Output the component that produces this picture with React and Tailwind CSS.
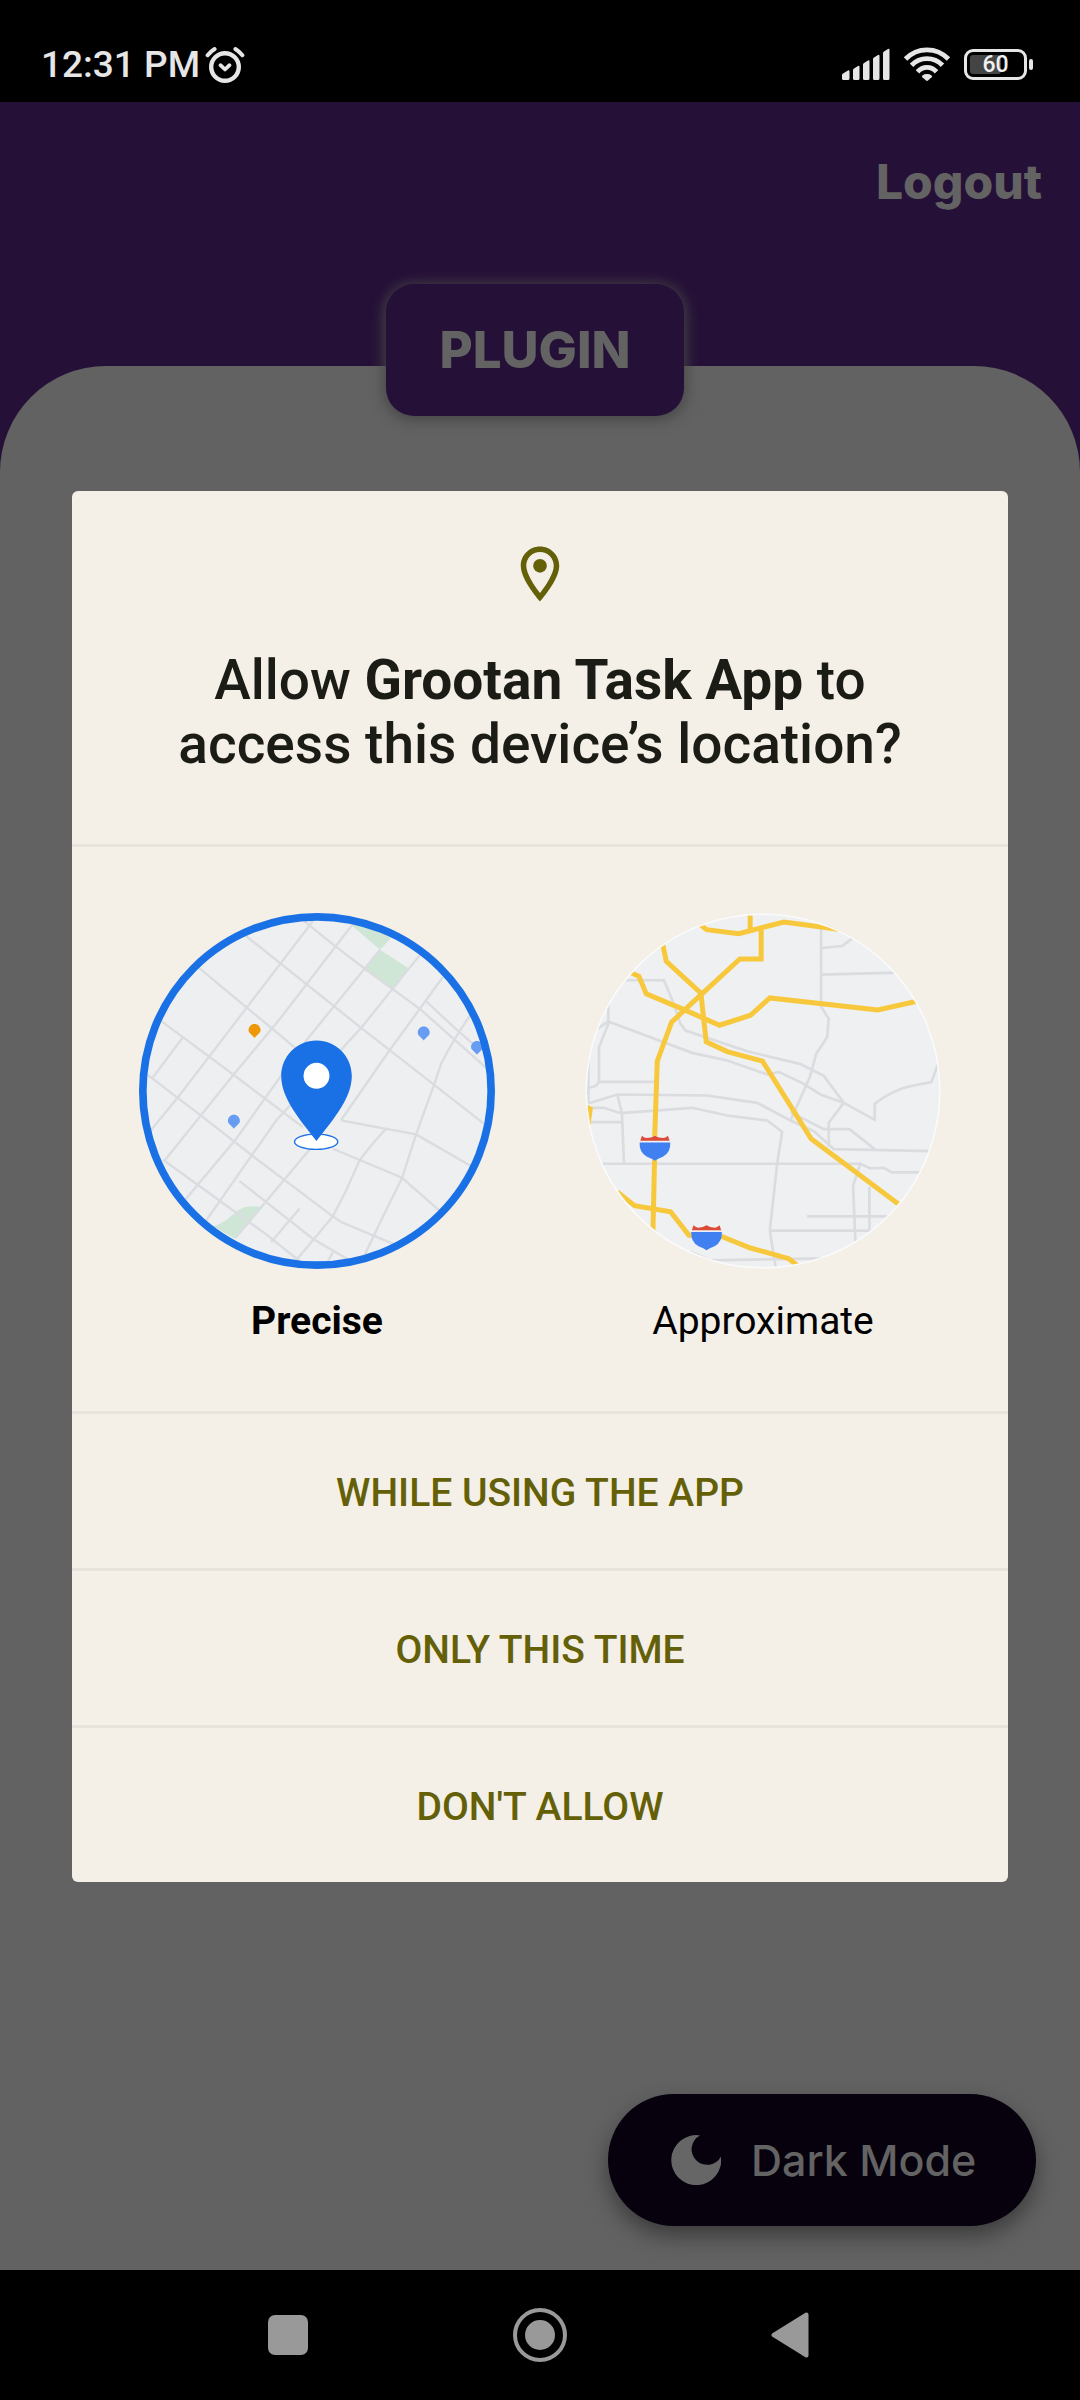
const GRAY = 'text-[#636363]'

function AlarmIcon() {
  return (
    <svg viewBox="0 0 40 38" className="h-[38px] w-[40px]" fill="none" stroke="#e6e6e6" strokeLinecap="round" aria-hidden="true">
      <circle cx="20" cy="21" r="13.8" strokeWidth="4.4" />
      <path d="M15.500 19.200l4.500 4.300 4.500-4.300" strokeWidth="3.8" strokeLinejoin="round" />
      <path d="M2.600 9.200Q5.500 5.600 9.600 3M37.400 9.200Q34.500 5.600 30.400 3" strokeWidth="4" />
    </svg>
  )
}

function SignalIcon() {
  return (
    <svg viewBox="0 0 48 32" className="h-[32px] w-[48px]" fill="#e6e6e6" aria-hidden="true">
      <path d="M0 27q0-1 1-1.600l5-3q1.500-.6 1.500 1V30.500q0 1.500-1.500 1.500H1.500Q0 32 0 30.500z" />
      <path d="M11 22q0-1 1-1.600l4-2.500q1.500-.6 1.500 1V30.500q0 1.500-1.500 1.500h-3.500Q11 32 11 30.500z" />
      <path d="M21 16.500q0-1 1-1.600l4-2.500q1.500-.6 1.500 1V30.500q0 1.500-1.500 1.500h-3.500Q21 32 21 30.500z" />
      <path d="M31 11q0-1 1-1.600l4-2.500q1.500-.6 1.500 1V30.500q0 1.500-1.500 1.500h-3.500Q31 32 31 30.500z" />
      <path d="M41 5q0-1 1-1.600l4-2.500q1.500-.6 1.500 1V30.500q0 1.500-1.500 1.500h-3.500Q41 32 41 30.500z" />
    </svg>
  )
}

function WifiIcon() {
  return (
    <svg viewBox="0 0 48 36" className="h-[36px] w-[48px]" fill="none" stroke="#e6e6e6" strokeWidth="4.800" aria-hidden="true">
      <path d="M2.500 13Q11.500 3.800 24 3.800t21.500 9.200" />
      <path d="M8.500 19.200Q15 12.600 24 12.600t15.500 6.600" />
      <path d="M14.500 25.800Q18.500 21.400 24 21.400T33.500 25.800" />
      <path d="M24 28q2.800 0 4.600 1.400 1 .8 0 1.900L25 34.600q-1 .9-2 0L19.400 31.300q-1-1.100 0-1.900Q21.200 28 24 28z" fill="#e6e6e6" stroke="none" />
    </svg>
  )
}

function Battery() {
  return (
    <div className="flex items-center gap-[2px]">
      <div className="relative flex h-[31px] w-[63px] items-center justify-center rounded-[9px] border-[3px] border-[#e6e6e6]">
        <span className="absolute inset-y-[3px] left-[3px] w-[31px] rounded-[3px] bg-[#444444]" />
        <span className="relative text-[23px] leading-none font-medium text-[#f0f0f0]">60</span>
      </div>
      <span className="h-[11px] w-[4px] rounded-[2px] bg-[#e6e6e6]" />
    </div>
  )
}

function StatusBar() {
  return (
    <header className="flex h-[102px] items-start justify-between bg-black pr-[47px] pl-[41px]">
      <div className="flex items-center gap-[5px] pt-[45px]">
        <span className="text-[37px] leading-[40px] font-medium text-[#e6e6e6]">12:31 PM</span>
        <AlarmIcon />
      </div>
      <div className="flex items-center gap-[13px] pt-[46px]">
        <SignalIcon />
        <WifiIcon />
        <Battery />
      </div>
    </header>
  )
}

function PlaceIcon() {
  return (
    <svg viewBox="0 0 24 24" className="size-[66px]" fill="#646008" aria-hidden="true">
      <path d="M12 2C8.130 2 5 5.130 5 9c0 5.250 7 13 7 13s7-7.750 7-13c0-3.870-3.130-7-7-7zM7 9c0-2.760 2.240-5 5-5s5 2.240 5 5c0 2.880-2.880 7.190-5 9.880C9.920 16.210 7 11.850 7 9z" />
      <circle cx="12" cy="9" r="2.500" />
    </svg>
  )
}

function SmallPin({ x, y, color }) {
  return (
    <path
      transform={`translate(${x} ${y})`}
      fill={color}
      d="M0-18c10 0 18 8 18 18 0 10-10 13-18 24-8-11-18-14-18-24 0-10 8-18 18-18z"
    />
  )
}

function PreciseMap() {
  return (
    <svg viewBox="58 67 1069 1069" className="size-[356px]" aria-hidden="true">
      <clipPath id="precise-clip">
        <circle cx="592" cy="601" r="525" />
      </clipPath>
      <g clipPath="url(#precise-clip)">
        <rect x="58" y="67" width="1069" height="1069" fill="#edeff1" />
        <g fill="#cfe6d6">
          <path d="M680 90L810 130 812 145 782 177z" />
          <path d="M782 177L866 232 820 296 738 236z" />
          <path d="M280 1008Q310 1000 340 972 365 948 390 948L432 948 348 1046z" />
        </g>
        <g fill="none" stroke="#dadce0" strokeWidth="7">
          <path d="M378 135L560 280 725 412 1110 712" />
          <path d="M555 92L645 165 738 236 905 358 1110 540" />
          <path d="M920 332L1020 425 1085 480" />
          <path d="M236 230L530 474" />
          <path d="M120 388L345 555 550 710M640 775L848 862 965 965" />
          <path d="M80 550L250 680 410 805 640 978 665 995 825 1062" />
          <path d="M130 808L440 1032 540 1112" />
          <path d="M360 872L580 1045 690 1110" />
          <path d="M580 92L380 353 175 620 85 730" />
          <path d="M700 100L485 380 340 555 135 810" />
          <path d="M782 177L560 450 350 745 195 930" />
          <path d="M190 440L100 560" />
          <path d="M900 195L725 412 470 690 260 990" />
          <path d="M970 260L810 480 664 690" />
          <path d="M572 775L350 1040" />
          <path d="M540 955L455 1055" />
          <path d="M664 690L890 732 1060 830" />
          <path d="M800 715Q740 780 718 815L680 900 640 978 528 1112" />
          <path d="M1055 370Q1000 450 965 520L945 580 890 732 848 862 790 980 728 1110" />
          <path d="M640 1085L620 1125" />
        </g>
        <SmallPin x={405} y={418} color="#ee9807" />
        <SmallPin x={343} y={691} color="#669df3" />
        <SmallPin x={913} y={426} color="#669df3" />
        <SmallPin x={1073} y={469} color="#669df3" />
        <ellipse cx="590" cy="754" rx="65" ry="23" fill="#ffffff" stroke="#1a71e5" strokeWidth="4" />
        <path
          d="M591 450c58 0 106 47 106 106 0 66-52 127-106 196-54-69-106-130-106-196 0-59 48-106 106-106z"
          fill="#1a71e5"
        />
        <circle cx="591" cy="556" r="39" fill="#ffffff" />
      </g>
      <circle cx="592.500" cy="601.500" r="523" fill="none" stroke="#1a71e5" strokeWidth="23" />
    </svg>
  )
}

function Shield({ x, y }) {
  return (
    <g transform={`translate(${x} ${y})`}>
      <path d="M-41-28Q-34-22-26-24-12-22 0-30 12-22 26-24 34-22 41-28L46-2Q46 26 0 45-46 26-46-2z" fill="#eef1f4" />
      <path d="M-44-14L-39-29Q-32-22-25-22-10-22 0-29 10-22 25-22 32-22 39-29L44-14z" fill="#dc4a38" />
      <path d="M-46-9H46Q48 20 24 34 8 40 0 46-8 40-24 34-48 20-46-9z" fill="#4080f1" />
    </g>
  )
}

function ApproximateMap() {
  return (
    <svg viewBox="73 67 1069 1069" className="size-[356px]" aria-hidden="true">
      <clipPath id="approximate-clip">
        <circle cx="607.500" cy="601.500" r="533" />
      </clipPath>
      <g clipPath="url(#approximate-clip)">
        <rect x="73" y="67" width="1069" height="1069" fill="#eef0f1" />
        <g fill="none" stroke="#dadce0" strokeWidth="8">
          <path d="M782 110V348L805 385 800 440 768 488 748 560 690 690" />
          <path d="M782 172L845 166 880 140M782 252L1010 246" />
          <path d="M180 269H310L335 328 360 400 375 420 560 482 718 520 790 556 850 637 943 688V640Q1000 595 1060 585L1113 575 1135 515" />
          <path d="M110 415L143 393 395 487 500 510 620 552 655 544 730 580 780 612 850 637 805 697V770" />
          <path d="M143 340V400L115 470V574H285M115 574Q105 592 85 590M83 500V640" />
          <path d="M85 638L170 612 440 615 590 637 690 690 760 722 820 776 1110 782" />
          <path d="M690 665L790 716H867L943 776" />
          <path d="M85 652H130L180 668 395 652 500 675 620 690 665 724 650 820 628 1020 645 1130" />
          <path d="M170 612L184 668 190 820M90 695H184M120 820H900" />
          <path d="M1080 846L995 846 970 832 930 834 900 820 878 885 885 1055" />
          <path d="M927 890V1020M740 978H980M628 1021H930" />
          <path d="M390 1085L450 1110 790 1104" />
        </g>
        <g fill="none" stroke="#f8c83c" strokeWidth="15">
          <path d="M415 98L438 117 535 129 670 94 850 118" />
          <path d="M569 70V118M602 118V205H538L372 358 333 395 290 512 282 750M282 800L277 1025" />
          <path d="M306 160L317 212 421 308 437 454 500 483 606 512 752 745 1020 945" />
          <path d="M208 245L235 257 257 310 372 358 477 404 570 374 628 322 952 358 1070 332" />
          <path d="M170 905L222 946 330 964 385 1035H400M480 1037L570 1073 685 1105 710 1125" />
        </g>
        <path d="M75 640L97 652 88 710 75 700z" fill="#f8c83c" />
        <Shield x={283} y={765} />
        <Shield x={438} y={1034} />
      </g>
      <circle cx="607.500" cy="601.500" r="531" fill="none" stroke="#fafafa" strokeWidth="5" />
    </svg>
  )
}

function AccuracyOption({ label, checked, children }) {
  return (
    <label className="flex flex-col items-center">
      <input type="radio" name="accuracy" defaultChecked={checked} className="peer sr-only" />
      {children}
      <span className="mt-[29px] text-[39px] leading-[46px] text-black peer-checked:font-bold">{label}</span>
    </label>
  )
}

function PermissionDialog() {
  return (
    <section
      role="dialog"
      aria-labelledby="permission-title"
      className="w-full divide-y-[3px] divide-[#e8e3dc] overflow-hidden rounded-[6px] bg-[#f4efe7]"
    >
      <div className="flex flex-col items-center px-[66px] pt-[50px] pb-[68px]">
        <PlaceIcon />
        <h1 id="permission-title" className="mt-[41px] text-center text-[55px] leading-[64px] font-medium text-[#1c1c16]">
          Allow <b className="font-bold">Grootan Task App</b> to access this device’s location?
        </h1>
      </div>
      <div className="flex justify-center gap-[90px] pt-[66px] pb-[67px]">
        <AccuracyOption label="Precise" checked>
          <PreciseMap />
        </AccuracyOption>
        <AccuracyOption label="Approximate">
          <ApproximateMap />
        </AccuracyOption>
      </div>
      {['WHILE USING THE APP', 'ONLY THIS TIME', "DON'T ALLOW"].map((action) => (
        <button
          key={action}
          type="button"
          className="block w-full pt-[56px] pb-[52px] text-center text-[39px] leading-[46px] font-medium text-[#646008]"
        >
          {action}
        </button>
      ))}
    </section>
  )
}

function MoonIcon() {
  return (
    <svg viewBox="0 0 50 50" className="size-[50px]" fill="#666666" aria-hidden="true">
      <path d="M29 0.400A25 25 0 1 0 50 21.500 15.600 15.600 0 1 1 29 0.400z" />
    </svg>
  )
}

function NavigationBar() {
  return (
    <nav className="flex h-[130px] justify-center bg-black">
      <div className="grid w-[70%] grid-cols-3 place-items-center">
        <button type="button" aria-label="Recent apps" className="size-[40px] rounded-[7px] bg-[#999999]" />
        <button
          type="button"
          aria-label="Home"
          className="flex size-[54px] items-center justify-center rounded-full border-[4px] border-[#999999]"
        >
          <span className="size-[30px] rounded-full bg-[#999999]" />
        </button>
        <button type="button" aria-label="Back">
          <svg viewBox="0 0 42 48" className="h-[48px] w-[42px]" fill="#999999" stroke="#999999" strokeWidth="4" strokeLinejoin="round">
            <path d="M2.500 24L35.500 3.500V44.500z" />
          </svg>
        </button>
      </div>
    </nav>
  )
}

export default function App() {
  return (
    <div className="flex min-h-screen flex-col bg-black font-['Roboto',sans-serif]">
      <StatusBar />
      <main className="relative flex flex-1 flex-col bg-[#251037] font-['Inter',sans-serif]">
        <div className="flex justify-end px-[38px] pt-[50px]">
          <a href="#logout" className={`text-[48px] leading-[60px] font-extrabold ${GRAY}`}>
            Logout
          </a>
        </div>
        <div className="mt-[154px] flex flex-1 flex-col justify-between rounded-t-[106px] bg-[#626262]">
          <h2
            className={`relative -mt-[82px] mr-[10px] flex h-[132px] w-[298px] items-center justify-center self-center rounded-[28px] bg-[#251037] text-[51px] font-extrabold shadow-[0_2px_14px_2px_#464646] ${GRAY}`}
          >
            PLUGIN
          </h2>
          <button
            type="button"
            className={`mr-[44px] mb-[44px] flex h-[132px] w-[428px] items-center gap-[30px] self-end rounded-full bg-[#06010d] pl-[63px] text-[43px] font-medium shadow-[0_10px_22px_rgba(0,0,0,0.4)] ${GRAY}`}
          >
            <MoonIcon />
            Dark Mode
          </button>
        </div>
        <div className="absolute inset-0 flex items-center px-[72px] font-['Roboto',sans-serif]">
          <PermissionDialog />
        </div>
      </main>
      <NavigationBar />
    </div>
  )
}
